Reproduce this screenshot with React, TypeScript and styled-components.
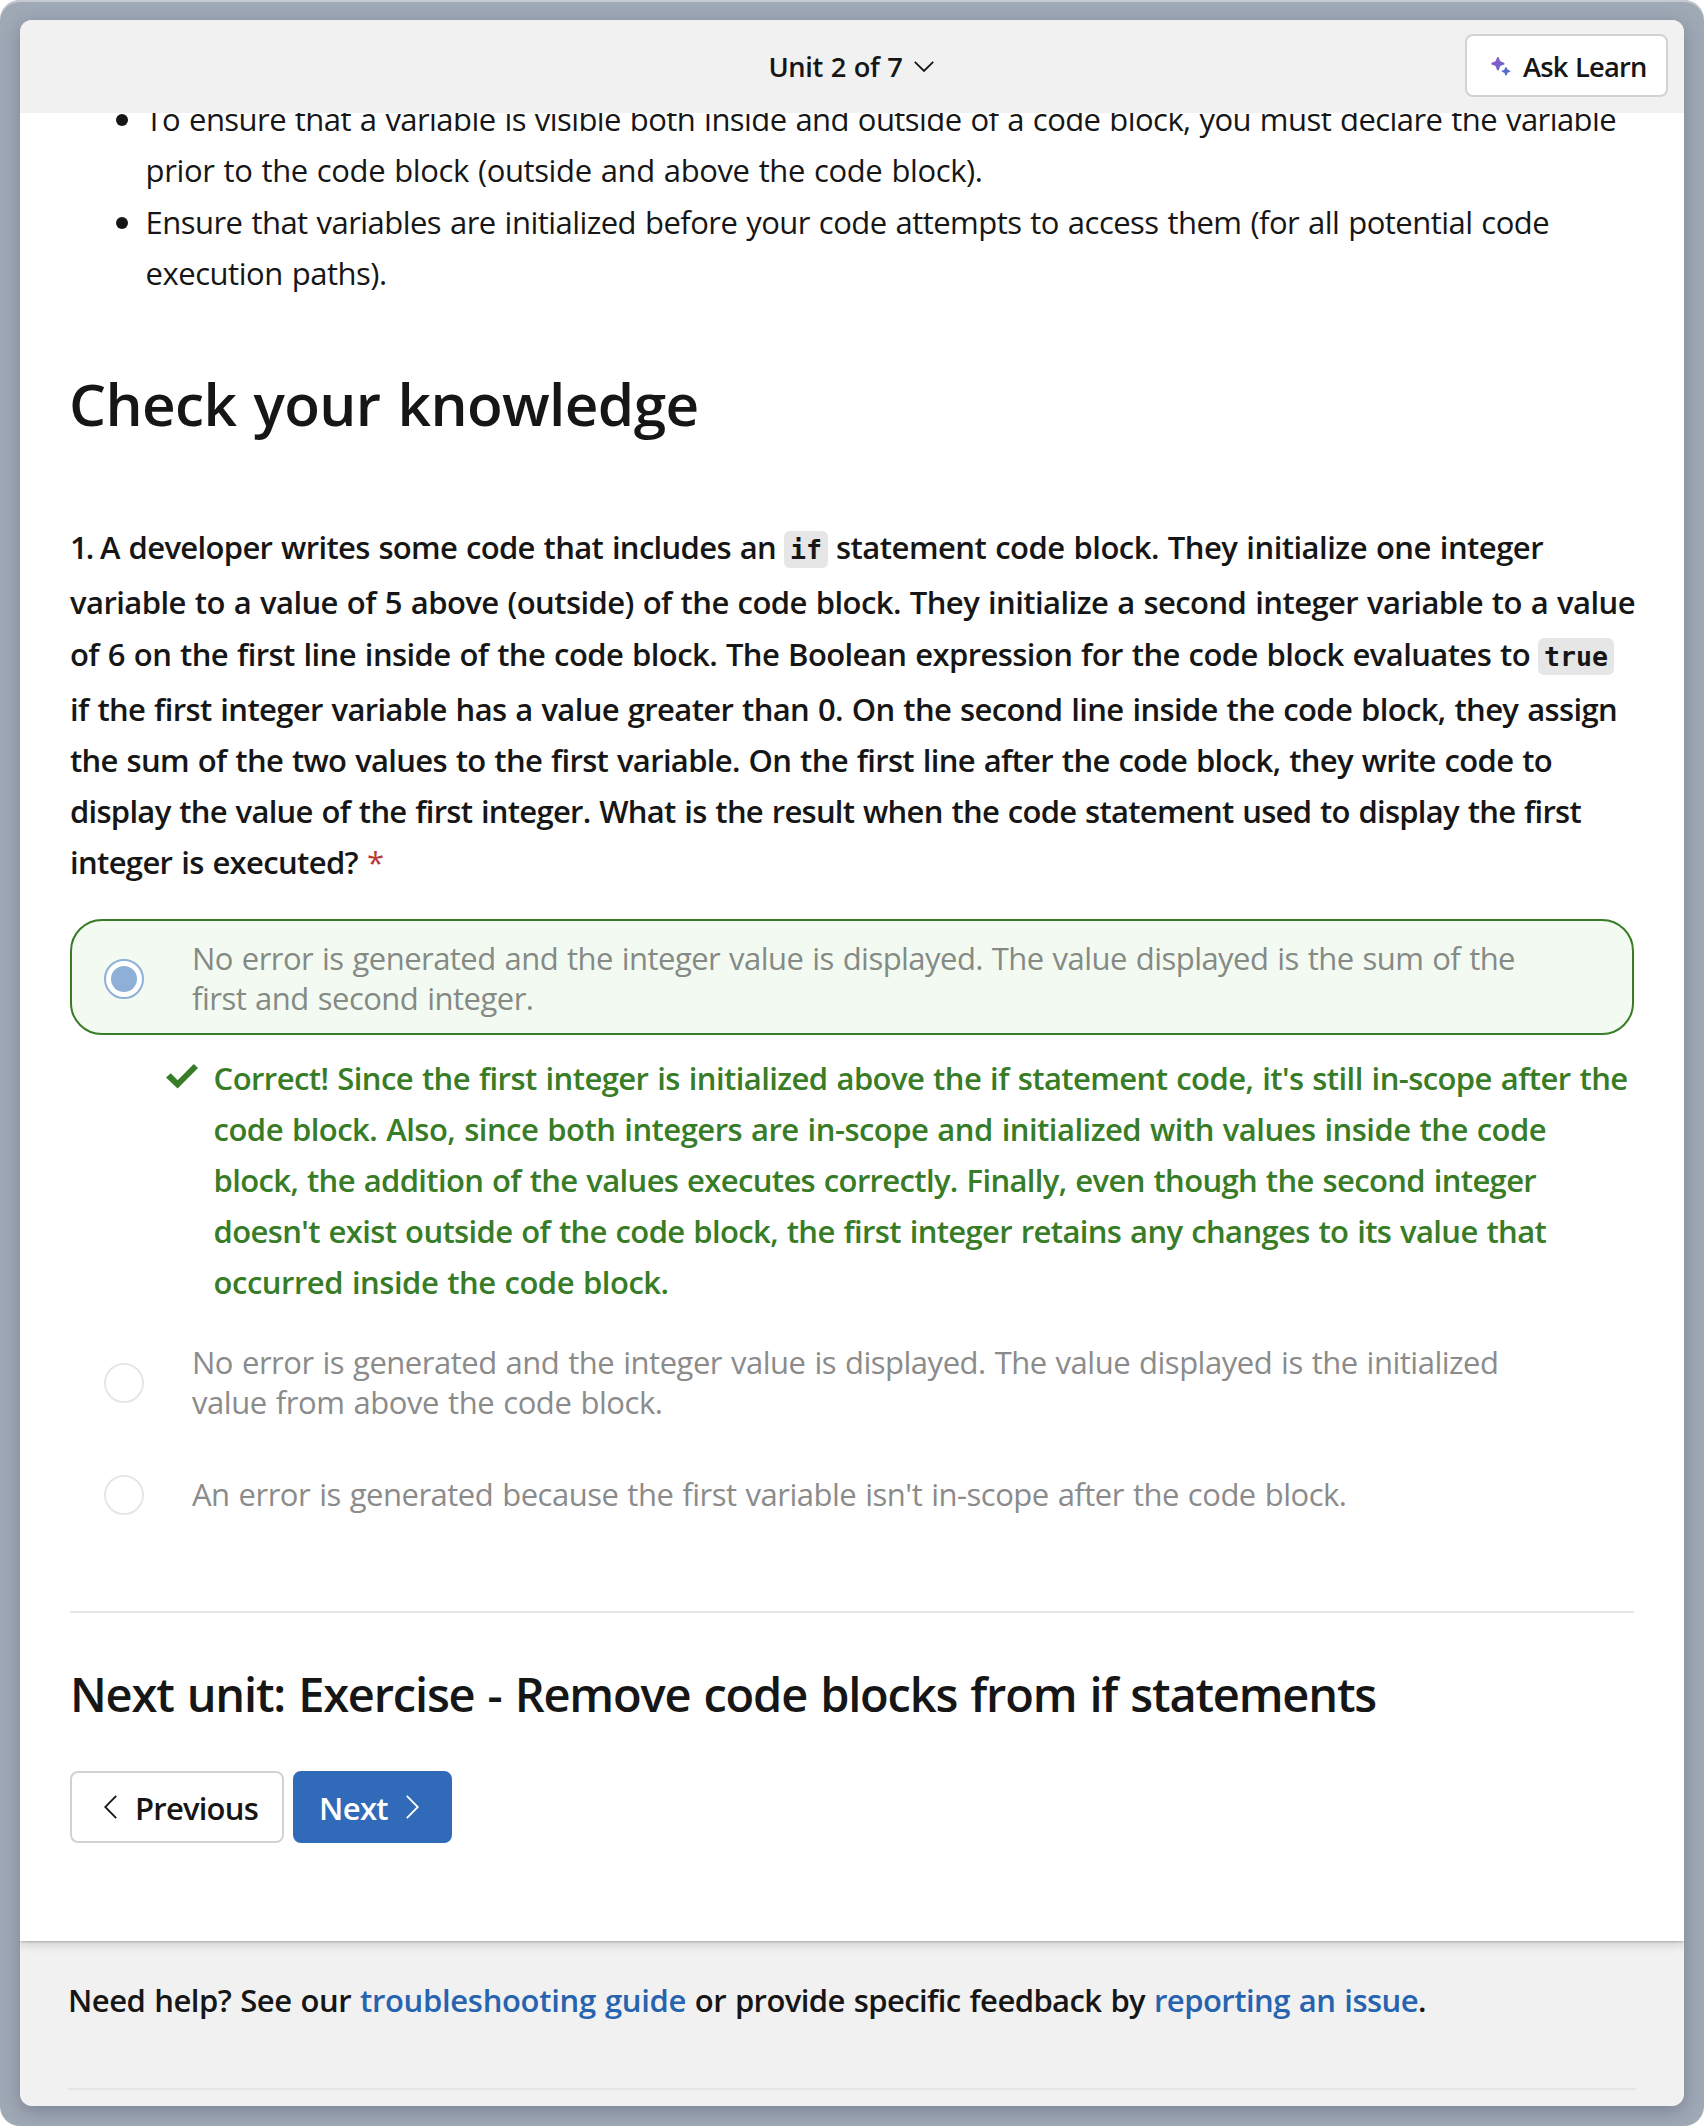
import React, { useLayoutEffect, useRef, useState } from 'react';
import styled, { createGlobalStyle, css } from 'styled-components';

const INK = '#161616';
const MUTED = '#8b8b8b';
const GREEN = '#387c27';
const LINK = '#2763ae';
const SANS = '"Open Sans", "Noto Sans", sans-serif';

const GlobalStyle = createGlobalStyle`
  *, *::before, *::after { box-sizing: border-box; }
  body { margin: 0; background: #fff; font-family: ${SANS}; color: ${INK}; }
  h2, h3, p, ul { margin: 0; padding: 0; font-weight: inherit; }
`;

const Desktop = styled.div`
  width: 1704px;
  height: 2126px;
  padding: 20px;
  border-radius: 20px;
  background: #9fa8b5;
  box-shadow: inset 0 2px 0 #c5cad3;
  overflow: hidden;
`;

const Window = styled.div`
  display: flex;
  flex-direction: column;
  height: 2086px;
  border-radius: 12px;
  background: #f1f1f1;
  overflow: hidden;
`;

const ShadowHost = styled.div`
  border-radius: 12px;
  box-shadow: 0 5px 18px rgba(50, 50, 80, 0.3);
`;

const Header = styled.header`
  position: relative;
  z-index: 1;
  flex: none;
  display: grid;
  grid-template-columns: 1fr auto 1fr;
  align-items: center;
  height: 93px;
  padding-right: 16px;
  padding-left: 16px;
  background: #f1f1f1;
`;

const UnitMenu = styled.button`
  grid-column: 2;
  display: flex;
  align-items: center;
  gap: 11px;
  padding: 0 2px 0 0;
  border: 0;
  background: none;
  color: ${INK};
  font: 600 27.3px/38px ${SANS};
`;

const buttonBase = css`
  display: flex;
  align-items: center;
  border-radius: 8px;
  font-family: ${SANS};
  font-weight: 600;
`;

const AskButton = styled.button`
  ${buttonBase}
  justify-self: end;
  gap: 12px;
  width: 203px;
  height: 63px;
  margin-bottom: 2px;
  padding: 2px 0 0 24px;
  border: 2px solid #d2d2d2;
  background: #fff;
  color: ${INK};
  font-size: 27.3px;
`;

const Main = styled.main`
  flex: none;
  height: 1828px;
  padding: 0 50px;
  background: #fff;
  box-shadow: 0 3px 10px rgba(0, 0, 0, 0.16), 0 1px 2px rgba(0, 0, 0, 0.2);
  z-index: 0;
`;

const BulletList = styled.ul`
  display: flex;
  flex-direction: column;
  gap: 0.6px;
  margin-top: -18.8px;
  padding-left: 46px;
  list-style: none;
`;

const BulletItem = styled.li`
  display: flex;
  gap: 17.6px;
  font-size: 31px;
  line-height: 51.2px;

  &::before {
    content: '';
    flex: none;
    width: 12px;
    height: 12px;
    margin-top: 19.8px;
    border-radius: 50%;
    background: ${INK};
  }
`;

const Line = styled.span<{ $h?: number }>`
  display: flex;
  align-items: flex-start;
  white-space: pre;
  ${p => p.$h && `height: ${p.$h}px;`}
`;

const SectionTitle = styled.h2`
  margin: 64.8px 0 0 -1px;
  font-weight: 600;
  font-size: 58.5px;
  line-height: 78px;
`;

const Question = styled.p`
  margin-top: 79.1px;
  font-weight: 600;
  font-size: 31px;
  line-height: 51.2px;
`;

const Code = styled.code`
  margin: 9.6px 8px 0;
  height: 37px;
  padding: 0 6px;
  border-radius: 6px;
  background: #e6e6e6;
  font: 700 26.6px/37px "DejaVu Sans Mono", monospace;
`;

const Required = styled.span`
  margin-left: 9px;
  color: #b73a35;
  font-weight: 400;
`;

const Option = styled.label<{ $correct?: boolean; $gap: number }>`
  display: flex;
  align-items: center;
  gap: 48px;
  margin-top: ${p => p.$gap}px;
  padding: 17px 0 15px 32px;
  border: 2px solid ${p => (p.$correct ? GREEN : 'transparent')};
  border-radius: 32px;
  background: ${p => (p.$correct ? '#f3faf2' : 'transparent')};
  color: ${p => (p.$correct ? '#858a85' : MUTED)};
  font-size: 31px;
  line-height: 40px;
  min-height: ${p => (p.$correct ? 116 : 76)}px;
`;

const Radio = styled.span<{ $checked?: boolean }>`
  flex: none;
  display: grid;
  place-items: center;
  width: 40px;
  height: 40px;
  margin: 1px 0 -1px;
  border: 2px solid ${p => (p.$checked ? '#8fb0d6' : '#e6e6e6')};
  border-radius: 50%;
  background: #fff;

  &::after {
    content: '';
    width: 26px;
    height: 26px;
    border-radius: 50%;
    background: ${p => (p.$checked ? '#8fb0d6' : 'transparent')};
  }
`;

const Feedback = styled.div`
  display: flex;
  gap: 15.6px;
  margin: 18px 0 0 96px;
  color: ${GREEN};
  font-weight: 600;
  font-size: 31px;
  line-height: 51px;

  & > svg { flex: none; margin-top: 11px; }
`;

const Divider = styled.hr<{ $gap: number }>`
  height: 2px;
  margin: ${p => p.$gap}px 0 0;
  border: 0;
  background: #e5e5e5;
`;

const NextTitle = styled.h3`
  margin: 50.3px 0 45.7px;
  font-weight: 600;
  font-size: 47px;
  line-height: 62px;
`;

const ButtonRow = styled.div`
  display: flex;
  gap: 9px;
`;

const NavButton = styled.button<{ $primary?: boolean }>`
  ${buttonBase}
  gap: 18px;
  width: ${p => (p.$primary ? 159 : 214)}px;
  height: 72px;
  padding: 2px 0 0 ${p => (p.$primary ? 24 : 32)}px;
  border: 2px solid ${p => (p.$primary ? '#316ab8' : '#d2d2d2')};
  background: ${p => (p.$primary ? '#316ab8' : '#fff')};
  color: ${p => (p.$primary ? '#fff' : INK)};
  font-size: 31px;

  & > svg { margin-bottom: 2px; }
`;

const Footer = styled.footer`
  flex: 1;
  padding: 34.2px 48px 0;
`;

const HelpText = styled.p`
  display: flex;
  white-space: pre;
  font-weight: 600;
  font-size: 31px;
  line-height: 51px;
`;

const Link = styled.a`
  color: ${LINK};
`;

const FitSpan = styled.span`
  white-space: pre;
  word-spacing: 0.045em;
`;

/** Single run of text whose tracking is tuned so that it spans `w` pixels. */
function Fit({ w, children }: { w: number; children: string }) {
  const ref = useRef<HTMLSpanElement>(null);
  const [tracking, setTracking] = useState(0);
  useLayoutEffect(() => {
    const el = ref.current!;
    el.style.letterSpacing = '0px';
    const natural = el.getBoundingClientRect().width;
    const next = (w - natural) / children.length;
    el.style.letterSpacing = `${next}px`;
    setTracking(next);
  }, [w, children]);
  return <FitSpan ref={ref} style={{ letterSpacing: `${tracking}px` }}>{children}</FitSpan>;
}

type TextLine = [width: number, text: string];

function Lines({ lines }: { lines: TextLine[] }) {
  return (
    <span>
      {lines.map(([w, text]) => <Line key={text}><Fit w={w}>{text}</Fit></Line>)}
    </span>
  );
}

const BULLETS: TextLine[][] = [
  [
    [1470.5, 'To ensure that a variable is visible both inside and outside of a code block, you must declare the variable'],
    [837, 'prior to the code block (outside and above the code block).'],
  ],
  [
    [1403.5, 'Ensure that variables are initialized before your code attempts to access them (for all potential code'],
    [241, 'execution paths).'],
  ],
];

const FEEDBACK: TextLine[] = [
  [1414, "Correct! Since the first integer is initialized above the if statement code, it's still in-scope after the"],
  [1332.5, 'code block. Also, since both integers are in-scope and initialized with values inside the code'],
  [1322.5, 'block, the addition of the values executes correctly. Finally, even though the second integer'],
  [1332.5, "doesn't exist outside of the code block, the first integer retains any changes to its value that"],
  [455, 'occurred inside the code block.'],
];

const ChevronDown = () => (
  <svg width="20" height="12" viewBox="0 0 20 12" fill="none" stroke={INK} strokeWidth="1.8">
    <path d="M0.8 0.8 10 10 19.2 0.8" />
  </svg>
);

const ChevronSide = ({ right }: { right?: boolean }) => (
  <svg width="13" height="24" viewBox="0 0 13 24" fill="none" stroke="currentColor" strokeWidth="1.8">
    <path d={right ? 'M0.8 0.8 11.8 12 0.8 23.2' : 'M12.2 0.8 1.2 12 12.2 23.2'} />
  </svg>
);

const Sparkle = () => (
  <svg width="20" height="20" viewBox="0 0 20 20">
    <defs>
      <linearGradient id="spark" x1="0" y1="0" x2="20" y2="20" gradientUnits="userSpaceOnUse">
        <stop offset="0.2" stopColor="#8a5cc6" />
        <stop offset="0.85" stopColor="#4a70cf" />
      </linearGradient>
    </defs>
    <g fill="url(#spark)">
      <path d="M5.8 0.9c.35-1.2 1.85-1.2 2.2 0l.8 2.3c.25.75.8 1.3 1.55 1.55l2.3.8c1.1.4 1.1 1.8 0 2.2l-2.3.8c-.75.25-1.3.8-1.55 1.55l-.8 2.3c-.35 1.2-1.85 1.2-2.2 0l-.8-2.3c-.25-.75-.8-1.3-1.55-1.55l-2.3-.8c-1.1-.4-1.1-1.8 0-2.2l2.3-.8c.75-.25 1.3-.8 1.55-1.55z" />
      <path d="M14.2 10.7c.25-.85 1.35-.85 1.6 0l.5 1.35c.15.45.5.8.95.95l1.35.5c.85.25.85 1.35 0 1.6l-1.35.5c-.45.15-.8.5-.95.95l-.5 1.35c-.25.85-1.35.85-1.6 0l-.5-1.35c-.15-.45-.5-.8-.95-.95l-1.35-.5c-.85-.25-.85-1.35 0-1.6l1.35-.5c.45-.15.8-.5.95-.95z" />
    </g>
  </svg>
);

const Check = () => (
  <svg width="32" height="25" viewBox="0 0 32 25" fill={GREEN}>
    <path d="M0 13.4 4.8 9.2 11.6 16.2 27.8 0 32 4 11.6 24.6z" />
  </svg>
);

export default function App() {
  return (
    <>
      <GlobalStyle />
      <Desktop>
        <ShadowHost>
          <Window>
            <Header>
              <UnitMenu><Fit w={134}>Unit 2 of 7</Fit><ChevronDown /></UnitMenu>
              <AskButton><Sparkle /><Fit w={123.5}>Ask Learn</Fit></AskButton>
            </Header>
            <Main>
              <BulletList>
                {BULLETS.map((lines, i) => <BulletItem key={i}><Lines lines={lines} /></BulletItem>)}
              </BulletList>

              <SectionTitle><Fit w={629.5}>Check your knowledge</Fit></SectionTitle>

              <Question>
                <Line $h={55.4}>
                  <Fit w={30}>1. </Fit>
                  <Fit w={676}>A developer writes some code that includes an</Fit>
                  <Code>if</Code>
                  <Fit w={707}>statement code block. They initialize one integer</Fit>
                </Line>
                <Line $h={51.8}><Fit w={1565}>variable to a value of 5 above (outside) of the code block. They initialize a second integer variable to a value</Fit></Line>
                <Line $h={54.9}>
                  <Fit w={1460}>of 6 on the first line inside of the code block. The Boolean expression for the code block evaluates to</Fit>
                  <Code>true</Code>
                </Line>
                <Line $h={51}><Fit w={1547}>if the first integer variable has a value greater than 0. On the second line inside the code block, they assign</Fit></Line>
                <Line $h={51}><Fit w={1482}>the sum of the two values to the first variable. On the first line after the code block, they write code to</Fit></Line>
                <Line $h={51}><Fit w={1511}>display the value of the first integer. What is the result when the code statement used to display the first</Fit></Line>
                <Line $h={51.1}><Fit w={288}>integer is executed?</Fit><Required>*</Required></Line>
              </Question>

              <Option $correct $gap={31.4}>
                <Radio $checked />
                <Lines lines={[
                  [1323, 'No error is generated and the integer value is displayed. The value displayed is the sum of the'],
                  [341.5, 'first and second integer.'],
                ]} />
              </Option>
              <Feedback>
                <Check />
                <Lines lines={FEEDBACK} />
              </Feedback>
              <Option $gap={15.4}>
                <Radio />
                <Lines lines={[
                  [1306.5, 'No error is generated and the integer value is displayed. The value displayed is the initialized'],
                  [470.5, 'value from above the code block.'],
                ]} />
              </Option>
              <Option $gap={16}>
                <Radio />
                <Lines lines={[[1154.5, "An error is generated because the first variable isn't in-scope after the code block."]]} />
              </Option>

              <Divider $gap={79.7} />

              <NextTitle><Fit w={1306}>Next unit: Exercise - Remove code blocks from if statements</Fit></NextTitle>
              <ButtonRow>
                <NavButton><ChevronSide /><Fit w={123}>Previous</Fit></NavButton>
                <NavButton $primary><Fit w={69}>Next</Fit><ChevronSide right /></NavButton>
              </ButtonRow>
            </Main>
            <Footer>
              <HelpText>
                <Fit w={292}>Need help? See our </Fit>
                <Link><Fit w={326}>troubleshooting guide</Fit></Link>
                <Fit w={468}> or provide specific feedback by </Fit>
                <Link><Fit w={264}>reporting an issue</Fit></Link>.
              </HelpText>
              <Divider $gap={61.8} />
            </Footer>
          </Window>
        </ShadowHost>
      </Desktop>
    </>
  );
}
